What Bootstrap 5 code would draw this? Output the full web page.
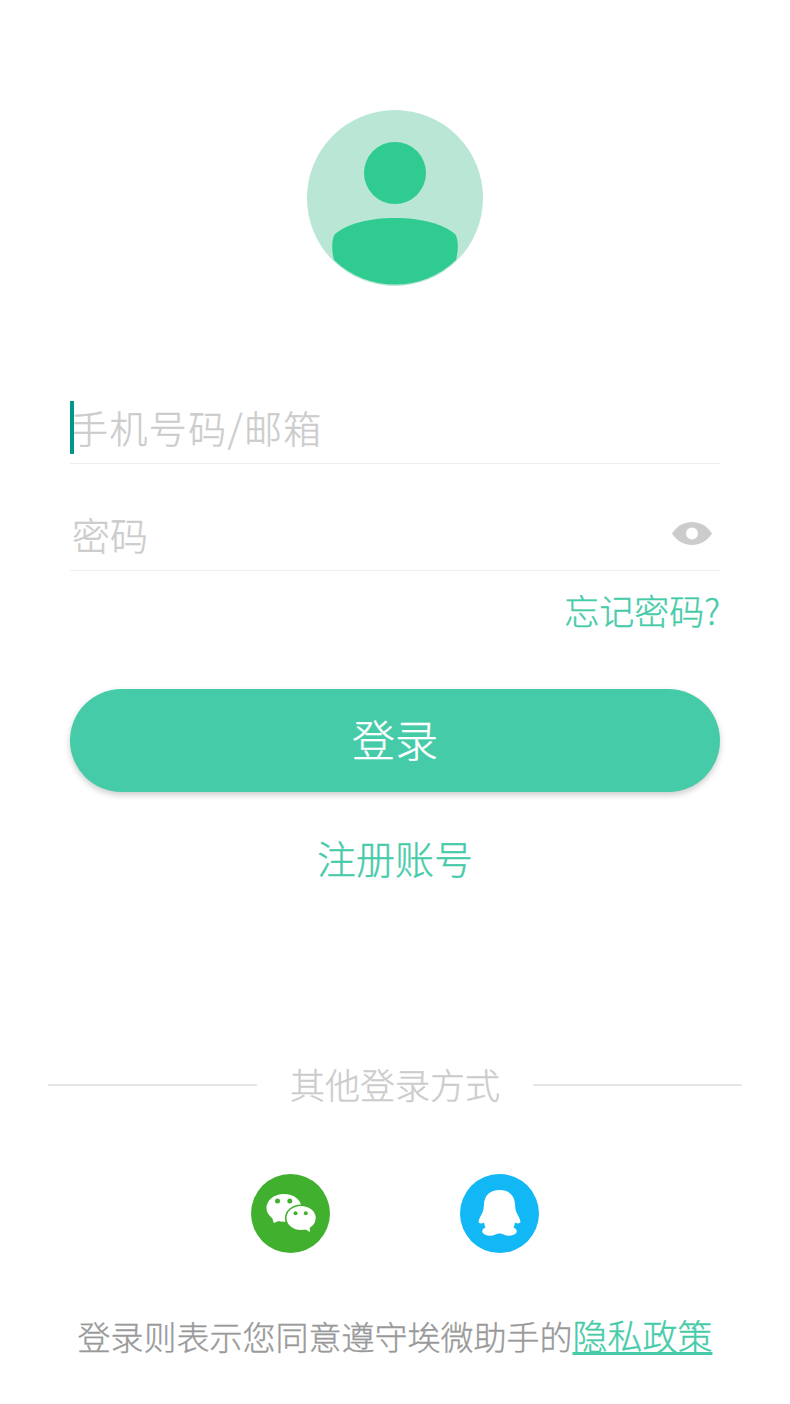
<!DOCTYPE html>
<html lang="zh-CN">
<head>
    <meta charset="UTF-8">
    <meta name="viewport" content="width=device-width, initial-scale=1.0">
    <title>登录</title>
    <link href="https://cdn.jsdelivr.net/npm/bootstrap@5.3.3/dist/css/bootstrap.min.css" rel="stylesheet">
    <style>
        body {
            background-color: #fff;
            font-family: "Noto Sans CJK SC", "Noto Sans", sans-serif;
            font-weight: 300;
            -webkit-text-stroke: .35px;
            height: 1404px;
            overflow: hidden;
        }
        .login-page { padding-top: 110px; }
        .avatar-img { width: 176px; height: 176px; display: block; }
        .login-form { width: 650px; margin-top: 115px; }
        .field-row { height: 63px; border-bottom: 1px solid #eeeeee; }
        .field-row + .field-row { margin-top: 44px; }
        .field-input {
            border: 0;
            border-radius: 0;
            padding: 0 0 0 2px;
            height: 51px;
            font-size: 38px;
            font-weight: 300;
            background: transparent;
            box-shadow: none !important;
        }
        .field-input::placeholder { color: #cccccc; opacity: 1; }
        .field-account { padding-left: 0; letter-spacing: 1.4px; }
        .field-caret {
            position: absolute;
            left: 0;
            top: 0;
            width: 4px;
            height: 53px;
            background-color: #009688;
        }
        .eye-img { width: 40px; height: 23px; flex: none; margin: 14px 8px 0 0; }
        .forgot-link { color: #46cba9; font-size: 35px; line-height: 40px; margin-top: 19px; text-decoration: none; }
        .login-btn {
            height: 103px;
            margin-top: 59px;
            padding: 0 0 4px;
            border: 0;
            border-radius: 52px;
            background-color: #46cba9;
            color: #fff;
            font-size: 43px;
            font-weight: 300;
            box-shadow: 0 3px 6px rgba(0, 0, 0, .2);
        }
        .register-link { color: #46cba9; font-size: 39px; line-height: 50px; margin-top: 40px; text-decoration: none; }
        .other-title { width: 694px; margin-top: 180px; color: #cccccc; font-size: 35px; line-height: 44px; }
        .other-line { flex: 1; height: 2px; background-color: #e6e6e6; }
        .other-text { width: 276px; padding-bottom: 2px; text-align: center; }
        .social-row { margin-top: 66px; gap: 130px; }
        .social-img { width: 79px; height: 79px; display: block; }
        .policy-text { margin-top: 59px; color: #999999; font-size: 33px; line-height: 46px; white-space: nowrap; }
        .policy-text a { color: #46cba9; font-size: 35px; }
    </style>
</head>
<body>
    <div class="login-page d-flex flex-column align-items-center">
        <svg class="avatar-img" viewBox="0 0 176 176">
            <circle cx="88" cy="88" r="88" fill="#b9e6d5"/>
            <circle cx="88" cy="63" r="31" fill="#2fcb90"/>
            <path d="M27 150C24 138 25 128 28 124C40 114 62 108 88 108S136 114 148 124C151 128 152 138 149 150A88 88 0 0 1 27 150Z" fill="#2fcb90"/>
        </svg>

        <form class="login-form d-flex flex-column">
            <div class="field-row position-relative">
                <input class="form-control field-input field-account" type="text" placeholder="手机号码/邮箱">
                <span class="field-caret"></span>
            </div>
            <div class="field-row d-flex align-items-start">
                <input class="form-control field-input" type="password" placeholder="密码">
                <svg class="eye-img" viewBox="0 0 40 23">
                    <path d="M0 11.500C4 5 11 0 20 0S36 5 40 11.500C36 18 29 23 20 23S4 18 0 11.500Z" fill="#cccccc"/>
                    <circle cx="20" cy="11.500" r="6" fill="#fff"/>
                </svg>
            </div>
            <a class="forgot-link align-self-end" href="#">忘记密码?</a>
            <button class="btn login-btn w-100" type="button">登录</button>
            <a class="register-link align-self-center" href="#">注册账号</a>
        </form>

        <div class="other-title d-flex align-items-center">
            <span class="other-line"></span>
            <span class="other-text">其他登录方式</span>
            <span class="other-line"></span>
        </div>

        <div class="social-row d-flex">
            <svg class="social-img" viewBox="0 0 79 79">
                <circle cx="39.500" cy="39.500" r="39.500" fill="#41b02f"/>
                <ellipse cx="33" cy="33.800" rx="17.500" ry="13.900" fill="#fff"/>
                <path d="M21 43L22.800 49L30 46Z" fill="#fff"/>
                <ellipse cx="50.100" cy="44" rx="16.200" ry="13.500" fill="#41b02f"/>
                <ellipse cx="50.100" cy="44" rx="14.600" ry="12" fill="#fff"/>
                <path d="M52 54L59 58L58.500 51Z" fill="#fff"/>
                <circle cx="26.500" cy="27" r="2.500" fill="#41b02f"/>
                <circle cx="38.800" cy="27" r="2.500" fill="#41b02f"/>
                <circle cx="44.500" cy="39.300" r="2" fill="#41b02f"/>
                <circle cx="54.800" cy="39.300" r="2" fill="#41b02f"/>
            </svg>
            <svg class="social-img" viewBox="0 0 79 79">
                <circle cx="39.500" cy="39.500" r="39.500" fill="#12b7f5"/>
                <path d="M39.500 16C30 16 24.500 21.500 24 30C23.800 34 23.500 37 21.500 40.500C20 43 18.800 45.500 18.500 48C19.500 50 22 49.500 24 48.500C24.300 50.500 24.800 52 25.500 53.500C23 54.500 21.800 56 22.500 58.500C24 61.500 30.500 62.800 35.500 60.500C37 59.800 38 59.500 39.500 59.500C41 59.500 42 59.800 43.500 60.500C48.500 62.800 55 61.500 56.500 58.500C57.200 56 56 54.500 53.500 53.500C54.200 52 54.700 50.500 55 48.500C57 49.500 59.500 50 60.500 48C60.200 45.500 59 43 57.500 40.500C55.500 37 55.200 34 55 30C54.500 21.500 49 16 39.500 16Z" fill="#fff"/>
            </svg>
        </div>

        <p class="policy-text">登录则表示您同意遵守埃微助手的<a href="#">隐私政策</a></p>
    </div>

    <script src="https://cdn.jsdelivr.net/npm/bootstrap@5.3.3/dist/js/bootstrap.bundle.min.js"></script>
</body>
</html>
